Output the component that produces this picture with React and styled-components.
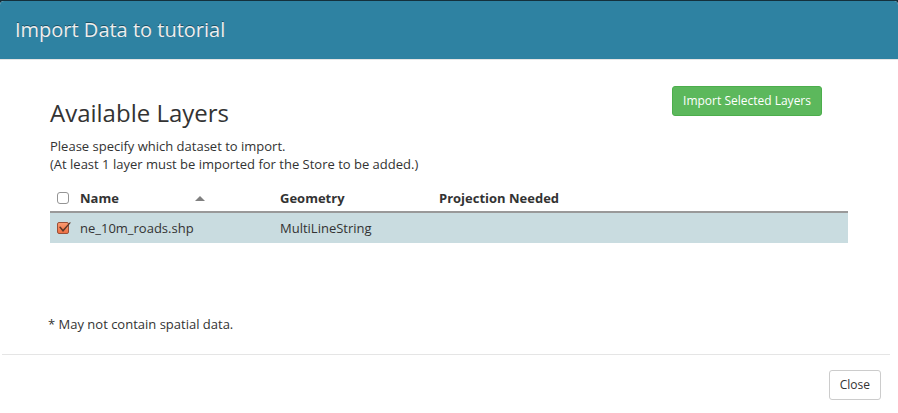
import React, { useState } from "react";
import styled, { createGlobalStyle } from "styled-components";

const GlobalStyle = createGlobalStyle`
  *, *::before, *::after { box-sizing: border-box; }
  body {
    margin: 0;
    background: #fff;
    color: #333;
    font: 13px/18px "Open Sans", "Noto Sans", sans-serif;
  }
`;

const Page = styled.div`
  background: #14303c;
  padding-top: 1px;
`;

const Dialog = styled.section`
  background: #fff;
  border-radius: 4px 4px 0 0;
`;

const Header = styled.header`
  padding: 14px 15px;
  background: #2e82a2;
  border-bottom: 1px solid #e5e5e5;
  border-radius: 4px 4px 0 0;
`;

const Title = styled.h1`
  margin: 0;
  color: #eee;
  font-size: 20px;
  font-weight: 400;
  line-height: 30px;
  text-shadow: 0 -1px 0 rgba(0, 0, 0, 0.4);
`;

const Body = styled.main`
  padding: 26px 50px 21px;
`;

const Intro = styled.div`
  display: flex;
  justify-content: space-between;
  align-items: flex-start;
  padding-right: 26px;
`;

const Heading = styled.h2`
  margin: 12px 0 9px;
  font-size: 24px;
  font-weight: 400;
  line-height: 30px;
`;

const Text = styled.p`
  margin: 0;
`;

const Button = styled.button`
  height: 30px;
  padding: 0 10px;
  border: 1px solid ${(p) => (p.$primary ? "#4cae4c" : "#ccc")};
  border-radius: 3px;
  background: ${(p) => (p.$primary ? "#5cb85c" : "#fff")};
  color: ${(p) => (p.$primary ? "#fff" : "#333")};
  font: 12px/18px "Open Sans", "Noto Sans", sans-serif;
  white-space: nowrap;
  cursor: pointer;
`;

const Table = styled.table`
  width: 100%;
  margin-top: 12px;
  border-collapse: separate;
  border-spacing: 0;
  table-layout: fixed;
  text-align: left;
`;

const HeadCell = styled.th`
  width: ${(p) => p.$width || "auto"};
  height: 28px;
  padding: 0;
  border-bottom: 2px solid #999;
  font-weight: 700;
`;

const Cell = styled.td`
  height: 30px;
  padding: 0;
  background: #c9dce0;
`;

const Sortable = styled.div`
  display: flex;
  align-items: center;
  justify-content: space-between;
  padding-right: 75px;
`;

const Tick = styled.label`
  display: grid;
  width: 16px;
  height: 14px;
  margin-left: 6px;
  > * { grid-area: 1 / 1; }
`;

const TickInput = styled.input`
  appearance: none;
  width: 12px;
  height: 12px;
  margin: 1px;
  border: 1px solid #949494;
  border-radius: 3px;
  background: #fff;
  &:checked {
    border-color: #9a5038;
    border-radius: 2px;
    background: linear-gradient(#fa9a70, #ed7044);
  }
`;

const TickMark = styled.svg`
  pointer-events: none;
`;

const Note = styled.p`
  margin: 72px -2px 0;
`;

const Footer = styled.footer`
  display: flex;
  justify-content: flex-end;
  margin: 0 8px 0 2px;
  padding: 15px 9px 13px;
  border-top: 1px solid #e5e5e5;
`;

function Checkbox({ label, checked, onChange }) {
  return (
    <Tick>
      <TickInput type="checkbox" aria-label={label} checked={checked} onChange={onChange} />
      {checked && (
        <TickMark width="16" height="14" viewBox="0 0 16 14" aria-hidden="true">
          <path d="M3 6 4.5 5.5 7 8.5 13.5 1.5 15 1.5 7 11Z" fill="#5b3828" />
        </TickMark>
      )}
    </Tick>
  );
}

export default function App() {
  const [all, setAll] = useState(false);
  const [roads, setRoads] = useState(true);
  return (
    <>
      <GlobalStyle />
      <Page>
        <Dialog>
          <Header>
            <Title>Import Data to tutorial</Title>
          </Header>
          <Body>
            <Intro>
              <div>
                <Heading>Available Layers</Heading>
                <Text>Please specify which dataset to import.</Text>
                <Text>(At least 1 layer must be imported for the Store to be added.)</Text>
              </div>
              <Button type="button" $primary>Import Selected Layers</Button>
            </Intro>
            <Table>
              <thead>
                <tr>
                  <HeadCell $width="30px">
                    <Checkbox label="Select all layers" checked={all} onChange={() => setAll(!all)} />
                  </HeadCell>
                  <HeadCell $width="200px" aria-sort="ascending">
                    <Sortable>
                      Name
                      <svg width="10" height="5" viewBox="0 0 10 5" aria-hidden="true">
                        <path d="M0 5 5 0 10 5Z" fill="#808080" />
                      </svg>
                    </Sortable>
                  </HeadCell>
                  <HeadCell $width="159px">Geometry</HeadCell>
                  <HeadCell>Projection Needed</HeadCell>
                </tr>
              </thead>
              <tbody>
                <tr>
                  <Cell>
                    <Checkbox label="Select ne_10m_roads.shp" checked={roads} onChange={() => setRoads(!roads)} />
                  </Cell>
                  <Cell>ne_10m_roads.shp</Cell>
                  <Cell>MultiLineString</Cell>
                  <Cell />
                </tr>
              </tbody>
            </Table>
            <Note>* May not contain spatial data.</Note>
          </Body>
          <Footer>
            <Button type="button">Close</Button>
          </Footer>
        </Dialog>
      </Page>
    </>
  );
}
